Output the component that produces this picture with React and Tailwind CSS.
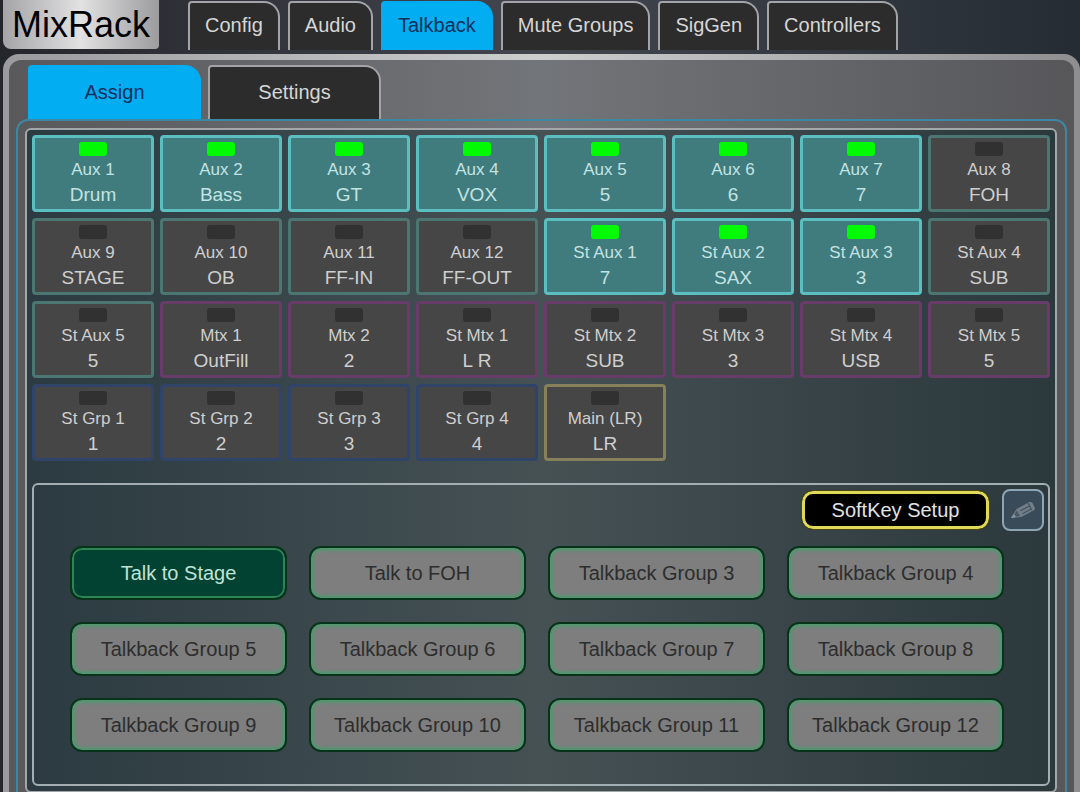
const topTabs = ["Config", "Audio", "Talkback", "Mute Groups", "SigGen", "Controllers"];

const channels = [
  { label: "Aux 1", name: "Drum", type: "aux", on: true },
  { label: "Aux 2", name: "Bass", type: "aux", on: true },
  { label: "Aux 3", name: "GT", type: "aux", on: true },
  { label: "Aux 4", name: "VOX", type: "aux", on: true },
  { label: "Aux 5", name: "5", type: "aux", on: true },
  { label: "Aux 6", name: "6", type: "aux", on: true },
  { label: "Aux 7", name: "7", type: "aux", on: true },
  { label: "Aux 8", name: "FOH", type: "aux" },
  { label: "Aux 9", name: "STAGE", type: "aux" },
  { label: "Aux 10", name: "OB", type: "aux" },
  { label: "Aux 11", name: "FF-IN", type: "aux" },
  { label: "Aux 12", name: "FF-OUT", type: "aux" },
  { label: "St Aux 1", name: "7", type: "aux", on: true },
  { label: "St Aux 2", name: "SAX", type: "aux", on: true },
  { label: "St Aux 3", name: "3", type: "aux", on: true },
  { label: "St Aux 4", name: "SUB", type: "aux" },
  { label: "St Aux 5", name: "5", type: "aux" },
  { label: "Mtx 1", name: "OutFill", type: "mtx" },
  { label: "Mtx 2", name: "2", type: "mtx" },
  { label: "St Mtx 1", name: "L R", type: "mtx" },
  { label: "St Mtx 2", name: "SUB", type: "mtx" },
  { label: "St Mtx 3", name: "3", type: "mtx" },
  { label: "St Mtx 4", name: "USB", type: "mtx" },
  { label: "St Mtx 5", name: "5", type: "mtx" },
  { label: "St Grp 1", name: "1", type: "grp" },
  { label: "St Grp 2", name: "2", type: "grp" },
  { label: "St Grp 3", name: "3", type: "grp" },
  { label: "St Grp 4", name: "4", type: "grp" },
  { label: "Main (LR)", name: "LR", type: "main" },
];

const borders = {
  aux: "border-[#4b7672]",
  mtx: "border-[#673c68]",
  grp: "border-[#2f4468]",
  main: "border-[#86815a]",
};

const groups = [
  "Talk to Stage",
  "Talk to FOH",
  "Talkback Group 3",
  "Talkback Group 4",
  "Talkback Group 5",
  "Talkback Group 6",
  "Talkback Group 7",
  "Talkback Group 8",
  "Talkback Group 9",
  "Talkback Group 10",
  "Talkback Group 11",
  "Talkback Group 12",
];

function Tab({ active, className, children }) {
  const look = active
    ? "bg-[#02adf2] border-[#02adf2] text-[#0c2f5c]"
    : "bg-[#2c2c2c] border-[#a3a3a8] text-[#d6d6d6]";
  return (
    <button
      className={`rounded-tl-sm rounded-tr-2xl border-2 border-b-0 pb-[3px] text-xl whitespace-nowrap ${look} ${className}`}
    >
      {children}
    </button>
  );
}

function Channel({ label, name, type, on }) {
  const look = on
    ? "bg-[#407b7d] border-[#5bbfc1] text-[#c3e3e3]"
    : `bg-[#464646] text-[#cfcfcf] ${borders[type]}`;
  return (
    <button
      aria-pressed={!!on}
      className={`flex h-[77px] flex-col items-center rounded border-3 pt-1 ${look}`}
    >
      <span className={`h-[14px] w-7 shrink-0 rounded-[3px] ${on ? "bg-[#02fb02]" : "bg-[#313131]"}`} />
      <span className="mt-0.5 text-[17px] leading-6">{label}</span>
      <span className="text-[19px] leading-[26px]">{name}</span>
    </button>
  );
}

function GroupButton({ active, children }) {
  return (
    <button
      className={`h-[54px] rounded-xl border-2 border-[#07331b] text-xl inset-ring-2 ${
        active
          ? "bg-[#024233] text-[#bfe3d4] inset-ring-[#2f8455]"
          : "bg-[#7e7e7e] text-[#2d2d2d] inset-ring-[#42905f] inset-shadow-[0_0_3px_3px_#5a9474]"
      }`}
    >
      {children}
    </button>
  );
}

function PencilIcon() {
  return (
    <svg width="26" height="18" viewBox="0 0 26 18" fill="none" aria-hidden="true">
      <path d="M1 17 6.5 8 19.5 1Q21.5 0.5 22.5 2L24.8 6.5Q25.2 8.2 23.8 9.2L11.5 16Z" fill="#717e87" />
      <path d="M4.5 13 7 9.5 10 15.2 6 15.6Z" fill="#4a5964" />
      <path d="M1 17 3.5 13.2 5.6 16.5Z" fill="#8a969e" />
      <path d="M10.5 9.8 19 5.2M12.5 12.8 21.3 8M18.2 2.2 21.8 9.2" stroke="#43545f" strokeWidth="1.3" />
    </svg>
  );
}

export default function App() {
  return (
    <div className="min-h-screen bg-linear-to-r from-[#24262b] via-[#43464f] to-[#252c33] pl-[3px] font-['Liberation_Sans',Arial,sans-serif]">
      {/* Top bar */}
      <header className="flex h-[54px] items-start">
        <h1 className="mr-[29px] h-[49px] w-[156px] rounded-b rounded-bl-lg bg-linear-to-r from-[#a5a5a8] via-[#e2e2e3] to-[#9c9c9e] text-center text-4xl leading-[50px] text-black">
          MixRack
        </h1>
        <nav className="flex gap-2 pt-px">
          {topTabs.map((tab) => (
            <Tab key={tab} active={tab === "Talkback"} className="h-[49px] px-[15px]">
              {tab}
            </Tab>
          ))}
        </nav>
      </header>

      {/* Metal frame */}
      <main className="rounded-t-2xl bg-linear-to-r from-[#9b9b9d] via-[#cdcfcf] to-[#8e8e91] px-1.5 pt-1.5">
        <div className="rounded-t-xl bg-linear-to-r from-[#59595c] via-[#727579] to-[#57575a] px-[7px] pt-[5px]">
          <nav className="flex gap-[7px] pl-3">
            <Tab active className="h-[54px] w-[173px]">
              Assign
            </Tab>
            <Tab className="h-[54px] w-[173px]">Settings</Tab>
          </nav>

          <div className="rounded-t-xl border-2 border-b-0 border-[#3d87a3] pt-[7px] pr-2 pl-[7px]">
            <div className="rounded-md border-2 border-[#a2a8aa] bg-linear-to-r from-[#2b3b41] via-[#465154] to-[#2b383c] p-[5px]">
              {/* Channel assign grid */}
              <section className="grid grid-cols-8 gap-1.5">
                {channels.map((ch) => (
                  <Channel key={ch.label} {...ch} />
                ))}
              </section>

              {/* Talkback groups */}
              <section className="mt-[22px] rounded-md border-2 border-[#a2aeb1] px-1 pt-1 pb-8">
                <div className="flex items-center justify-end gap-3">
                  <button className="h-10 w-[189px] rounded-xl border border-[#4b4a12] bg-black text-xl text-[#e2e2e2] inset-ring-3 inset-ring-[#e0d957]">
                    SoftKey Setup
                  </button>
                  <button
                    aria-label="Edit softkey"
                    className="flex size-[42px] items-center justify-center rounded-lg border-2 border-[#8ea5b5] bg-[#394b58]"
                  >
                    <PencilIcon />
                  </button>
                </div>
                <div className="mt-[15px] grid grid-cols-4 gap-x-[22px] gap-y-[22px] pr-10 pl-8">
                  {groups.map((name, i) => (
                    <GroupButton key={name} active={i === 0}>
                      {name}
                    </GroupButton>
                  ))}
                </div>
              </section>
            </div>
          </div>
        </div>
      </main>
    </div>
  );
}
